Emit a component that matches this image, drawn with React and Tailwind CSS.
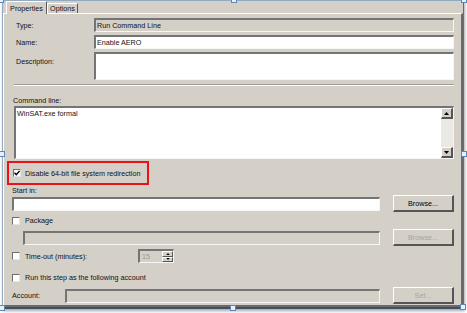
import React from "react";

const panel = "bg-[#d4d0c8]";
const sunken =
  "border-t-2 border-l-2 border-b border-r border-t-[#747474] border-l-[#747474] border-b-[#f6f6f6] border-r-[#f6f6f6]";
const raised =
  "border-t border-l border-b-2 border-r-2 border-t-white border-l-white border-b-[#555555] border-r-[#555555]";
const raisedThin =
  "border-t border-l border-b border-r border-t-white border-l-white border-b-[#555555] border-r-[#555555]";

function Check({ checked }) {
  return (
    <span className="flex h-[8px] w-[8px] shrink-0 items-center justify-center border-t border-l border-b border-r border-t-[#6e6e6e] border-l-[#6e6e6e] border-b-[#e4e4e4] border-r-[#e4e4e4] bg-white">
      {checked && (
        <svg width="6" height="6" viewBox="0 0 6 6">
          <path d="M0.5 2.8 L2.2 4.6 L5.6 0.9" fill="none" stroke="#000" strokeWidth="1.4" />
        </svg>
      )}
    </span>
  );
}

function Field({ children, white, className = "" }) {
  return (
    <div className={`flex h-[14px] items-center pl-[1px] ${sunken} ${white ? "bg-white" : panel} ${className}`}>
      {children}
    </div>
  );
}

function Btn({ children, disabled }) {
  return (
    <div
      className={`flex h-[17px] w-[61px] shrink-0 items-center justify-center ${panel} ${raised} ${
        disabled ? "text-[#a6a39e]" : "text-black"
      }`}
    >
      {children}
    </div>
  );
}

function Tri({ up, size = 5 }) {
  return (
    <svg width={size} height={Math.ceil(size / 2)} viewBox="0 0 5 3">
      <path d={up ? "M2.5 0 L5 3 L0 3Z" : "M0 0 L5 0 L2.5 3Z"} fill="#000" />
    </svg>
  );
}

function Handle({ className }) {
  return <div className={`absolute h-[6px] w-[6px] border border-[#5b86b5] bg-[#e8f1fb] ${className}`} />;
}

export default function App() {
  return (
    <div className="relative h-[313px] w-[467px] overflow-hidden bg-white font-['Liberation_Sans',Arial,sans-serif] text-[7.2px] leading-[9px] text-[#111]">
      <div className="ml-[2px] flex h-[309px] w-[462px] flex-col border-l border-t border-r border-b-2 border-l-[#93aac3] border-t-[#93aac3] border-r-[#5d6e82] border-b-[#3e5068] bg-[#d4d0c8] shadow-[1px_2px_3px_rgba(0,0,0,0.35)]">
        {/* tabs */}
        <div className="flex h-[12px] items-end pl-[3px]">
          <div className="relative z-10 -mb-px flex h-[13px] w-[41px] items-center justify-center border-l border-t border-r border-l-white border-t-white border-r-[#5a5a5a] bg-[#d4d0c8]">
            Properties
          </div>
          <div className="flex h-[10px] w-[31px] items-center justify-center border-l border-t border-r border-l-white border-t-white border-r-[#5a5a5a]">
            Options
          </div>
        </div>

        {/* panel */}
        <div className="flex flex-1 flex-col border-t border-l border-r-2 border-b-2 border-t-white border-l-white border-r-[#6a6a6a] border-b-[#6a6a6a] pl-[8px] pr-[7px]">
          <div className="mt-[4px] flex items-center">
            <div className="w-[82px] shrink-0 pl-[4px]">Type:</div>
            <Field className="flex-1">Run Command Line</Field>
          </div>
          <div className="mt-[3px] flex items-center">
            <div className="w-[82px] shrink-0 pl-[4px]">Name:</div>
            <Field white className="flex-1">Enable AERO</Field>
          </div>
          <div className="mt-[3px] flex items-start">
            <div className="w-[82px] shrink-0 pl-[4px] pt-[5px]">Description:</div>
            <div className={`h-[28px] flex-1 bg-white ${sunken}`} />
          </div>

          <div className="ml-[2px] mt-[4px] h-[2px] border-t border-b border-t-[#a09d97] border-b-white" />

          <div className="ml-[1px] mt-[10px]">Command line:</div>
          <div className={`ml-[2px] mt-[1px] flex h-[53px] bg-white ${sunken}`}>
            <div className="flex-1 pl-[1px] pt-[1px]">WinSAT.exe formal</div>
            <div className="flex w-[12px] flex-col bg-[#ebe9e5]">
              <div className={`flex h-[11px] items-center justify-center ${panel} ${raised}`}>
                <Tri up />
              </div>
              <div className="flex-1" />
              <div className={`flex h-[11px] items-center justify-center ${panel} ${raised}`}>
                <Tri />
              </div>
            </div>
          </div>

          <div className="-ml-[5px] mt-[2px] flex h-[24px] w-[142px] items-center border-2 border-[#e8141a] pl-[4px]">
            <Check checked />
            <span className="ml-[4px]">Disable 64-bit file system redirection</span>
          </div>

          <div className="mt-[1px]">Start in:</div>
          <div className="flex h-[17px] items-center gap-[13px]">
            <Field white className="flex-1" />
            <Btn>Browse...</Btn>
          </div>

          <div className="mt-[4px] flex items-center">
            <Check />
            <span className="ml-[5px]">Package</span>
          </div>
          <div className="mt-[4px] flex h-[17px] items-center gap-[13px] pl-[11px]">
            <Field className="flex-1" />
            <Btn disabled>Browse...</Btn>
          </div>

          <div className="mt-[3px] flex h-[14px] items-center">
            <Check />
            <span className="ml-[5px] w-[113px]">Time-out (minutes):</span>
            <div className={`flex h-[14px] w-[36px] ${sunken} ${panel}`}>
              <div className="flex flex-1 items-center pl-[2px] text-[#9c9a95]">15</div>
              <div className="flex w-[11px] flex-col">
                <div className={`flex flex-1 items-center justify-center ${raisedThin}`}>
                  <Tri up size={4} />
                </div>
                <div className={`flex flex-1 items-center justify-center ${raisedThin}`}>
                  <Tri size={4} />
                </div>
              </div>
            </div>
          </div>

          <div className="mt-[10px] flex items-center">
            <Check />
            <span className="ml-[5px]">Run this step as the following account</span>
          </div>

          <div className="mt-[5px] flex h-[17px] items-center">
            <div className="w-[53px] shrink-0">Account:</div>
            <Field className="flex-1" />
            <div className="ml-[13px]">
              <Btn disabled>Set...</Btn>
            </div>
          </div>
        </div>
      </div>

      {/* selection handles */}
      <Handle className="-left-[2px] -top-[3px]" />
      <Handle className="left-[231px] -top-[3px]" />
      <Handle className="left-[461px] -top-[3px]" />
      <Handle className="-left-[1px] top-[151px]" />
      <Handle className="left-[461px] top-[151px]" />
      <Handle className="-left-[1px] top-[305px]" />
      <Handle className="left-[230px] top-[305px]" />
      <Handle className="left-[460px] top-[304px]" />
    </div>
  );
}
